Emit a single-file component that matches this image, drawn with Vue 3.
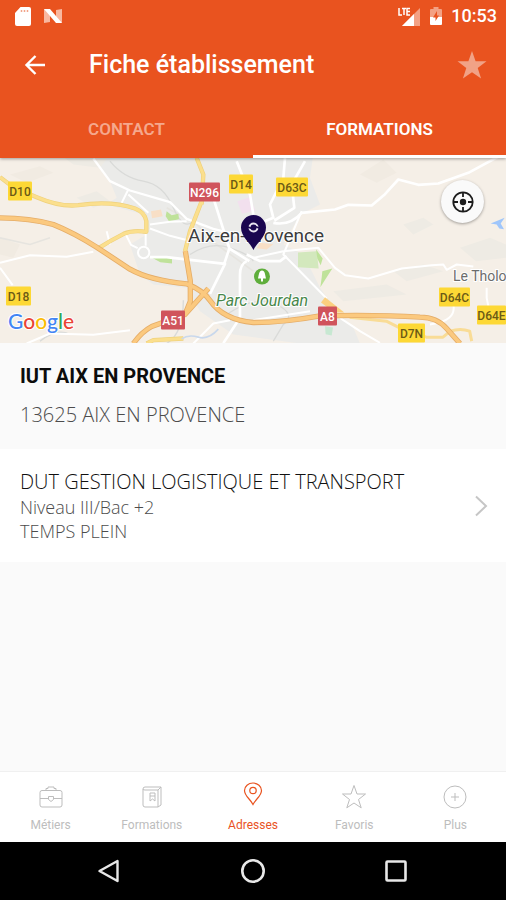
<script setup>
const tabs = [
  { label: 'CONTACT', active: false },
  { label: 'FORMATIONS', active: true },
]

const signs = [
  { text: 'D10', x: 8, y: 24, w: 24, kind: 'yellow' },
  { text: 'D14', x: 229, y: 17, w: 24, kind: 'yellow' },
  { text: 'D63C', x: 276, y: 20, w: 32, kind: 'yellow' },
  { text: 'N296', x: 189, y: 25, w: 31, kind: 'red' },
  { text: 'D18', x: 6, y: 129, w: 25, kind: 'yellow' },
  { text: 'A51', x: 161, y: 153, w: 24, kind: 'red' },
  { text: 'A8', x: 318, y: 149, w: 19, kind: 'red' },
  { text: 'D64C', x: 439, y: 130, w: 31, kind: 'yellow' },
  { text: 'D64E', x: 477, y: 148, w: 29, kind: 'yellow' },
  { text: 'D7N', x: 398, y: 166, w: 27, kind: 'yellow' },
]

const sections = [
  { id: 'metiers', label: 'Métiers' },
  { id: 'formations', label: 'Formations' },
  { id: 'adresses', label: 'Adresses', active: true },
  { id: 'favoris', label: 'Favoris' },
  { id: 'plus', label: 'Plus' },
]
</script>

<template>
  <div class="screen">
    <header class="top">
      <div class="status">
        <svg class="ico-sd" viewBox="0 0 16 19" aria-hidden="true">
          <path d="M5.500 0H14a2 2 0 0 1 2 2v15a2 2 0 0 1-2 2H2a2 2 0 0 1-2-2V6z" fill="#fff" />
          <path d="M6.500 3v2M9.500 3v2M12.500 3v2" stroke="#f2a58a" stroke-width="1.500" />
        </svg>
        <svg class="ico-n" viewBox="0 0 20 16" aria-hidden="true">
          <path d="M1 1l6 2v11l-6 1zM13 2l6-1v14l-6-2z" fill="#f8b8a0" />
          <path d="M1 1h6l12 14h-6z" fill="#fff" />
        </svg>
        <span class="grow"></span>
        <svg class="ico-lte" viewBox="0 0 22 19" aria-hidden="true">
          <path d="M22 1v18H4z" fill="#f3a184" />
          <path d="M16 7v12H4z" fill="#fff" />
          <path d="M1 1v7h3M4 1.500h4M6 1.500V8M12 1.500H9V8h3M9 4.500h3" fill="none" stroke="#fff" stroke-width="1.500" />
        </svg>
        <svg class="ico-bat" viewBox="0 0 12 18" aria-hidden="true">
          <path d="M3.500 0h5v2H11a1 1 0 0 1 1 1v8H0V3a1 1 0 0 1 1-1h2.500z" fill="#f3a184" />
          <path d="M0 10h12v7a1 1 0 0 1-1 1H1a1 1 0 0 1-1-1z" fill="#fff" />
          <path d="M7 4L3 10.500h2.500V14L9 8.500H7z" fill="#e9531f" />
        </svg>
        <time class="clock">10:53</time>
      </div>
      <div class="bar">
        <button class="plain back" aria-label="Retour">
          <svg viewBox="0 0 22 22"><path d="M21 11H3M11.500 2L2.500 11l9 9" fill="none" stroke="#fff" stroke-width="2.400" /></svg>
        </button>
        <h1>Fiche établissement</h1>
        <button class="plain fav" aria-label="Ajouter aux favoris">
          <svg viewBox="0 0 30 28"><path d="M15 0l3.600 10.200H29.500l-8.800 6.800 3.400 10.500L15 21.200 5.900 27.500 9.300 17 .5 10.200h10.900z" fill="#f1a286" /></svg>
        </button>
      </div>
      <nav class="tabs">
        <button v-for="t in tabs" :key="t.label" class="plain tab" :class="{ active: t.active }">{{ t.label }}</button>
      </nav>
    </header>

    <section class="map">
      <svg class="map-art" viewBox="0 0 506 186" preserveAspectRatio="xMidYMid slice">
        <rect width="506" height="186" fill="#f5efe7" />
        <g transform="translate(0 -3) scale(.33333)">
          <g fill="#ebebe9">
            <path d="M270 0L330 80 350 130 320 150 430 180 440 240 390 270 420 360 460 390 560 400 600 470 700 540 900 567H1080L1060 520 1010 470 960 400 910 300 850 270 900 180 960 150 930 70 940 0z" />
            <path d="M180 0h150l-30 40-80-10zM230 130l60-20 40 30-50 20zM1210 210l60-20 30 20-60 30zM1180 350l90-20 60 20-110 30zM1380 280l90-30 48 20v40l-90 10zM1000 410l160-20 60 30-190 20z" fill="#eeebe4" />
            <path d="M30 60l90-25 40 20-80 30zM0 250l60 20-20 40-40-10zM1080 60l70-45 40 40-60 30z" fill="#f1ebe2" />
          </g>
          <path d="M0 250l90 20 60-20M500 160l90 50 60 60 110 80" fill="none" stroke="#e6e4df" stroke-width="5" />
          <g fill="none" stroke="#d9dad8" stroke-width="4">
            <path d="M330 20q40 50 100 60t90 80 60 40M570 300q60-40 120-20t70 40M500 567q50-30 50-130M680 480q90-60 150-30t20 60l-30 50M120 560q50-40 90-20" />
          </g>
          <g fill="#bfe29a">
            <path d="M500 170l15 12 20-4 2 16-30 6-10-15zM448 305l68 6v16l-35-4z" />
            <path d="M894 294l56-4 6 52-62-4z" fill="#d3e8bd" />
            <path d="M948 284l20 28-6 20-10-20zM967 350l30-8-14 22-22 34 4-28z" />
            <path d="M975 515l24 4-4 24-18-4z" fill="#c7e8d2" />
          </g>
          <path d="M453 170l30-5 5 20-32 6zM780 265l40 4-20 16-30-4z" fill="#f8dfc6" />
          <path d="M712 140l38-12 16 40-40 10z" fill="#f2e0ee" />
          <g fill="none" stroke="#fff" stroke-width="8" stroke-linejoin="round">
            <path d="M280 12l50 68 60 28 120 35 50 50 80 30 120 30" stroke-width="7" />
            <path d="M385 105l-20 40M385 120l60 55M0 325l90-23 110 5 80-15M0 340l38 52M320 230l10 40M375 235l18 36 20 10M437 230v44M450 222l60 22 55 14M450 210l60-8 50-2" stroke-width="6" />
            <circle cx="431" cy="294" r="17" stroke-width="6" />
            <path d="M450 308l50 0 70 8 105 12-45 90M640 130l48 152 60 38M688 282l-16 48M710 20l40 100 10 60M740 320q-20 10-20 40v130l-50 76M740 300l40 20 60 0 20-15" />
            <path d="M855 10l-5 60-40 80 10 40-50 20M915 20l-40 70 8 70-60 38M820 205q50 10 85-30l100-10 40-14 70 2 40-34 40-44 60 16 60-4 90-32 100-54" />
            <path d="M905 170l-55 130 30 30 100 102M850 290l105-10 50 60 30 22 70 10 100-30 90-10 35-2 10 16 30-16 50 6M850 290l-90 20M760 497l170-27M1460 400v30l10 50M1290 510q80-10 70-60M1020 490l60 40 60 35" stroke-width="6" />
            <path d="M80 567l70-30 130 4 110-14M580 567l60-60 50-10" stroke-width="6" />
          </g>
          <g fill="none" stroke-linejoin="round">
            <path d="M0 68l40 30 70 30q70 30 125 24 100-14 170 10 30 12 34 38v32q-40-6-68 6-40 20-80 46M590 10l20 50-5 90M605 140l-35 90-15 60M440 567l20-10 90-5" stroke="#efd17c" stroke-width="13" />
            <path d="M0 68l40 30 70 30q70 30 125 24 100-14 170 10 30 12 34 38v32q-40-6-68 6-40 20-80 46M590 10l20 50-5 90M605 140l-35 90-15 60M440 567l20-10 90-5" stroke="#fbdf8d" stroke-width="9" />
            <path d="M1049 488l110 12 40 20 80 28h50l22-18q30-10 58 0l6 30" stroke="#f9dc96" stroke-width="9" />
            <path d="M0 190q90 0 160 20 60 24 130 68l100 66q60 34 170 44 50 20 70 50 40 58 130 66 90 0 200-20 170-4 300 4 50 0 80 34l40 45M625 402l-70 78-100 36q-30 16-55 51M556 290l15 90v60l-16 40" stroke="#e5ad68" stroke-width="16" />
            <path d="M0 190q90 0 160 20 60 24 130 68l100 66q60 34 170 44 50 20 70 50 40 58 130 66 90 0 200-20 170-4 300 4 50 0 80 34l40 45M625 402l-70 78-100 36q-30 16-55 51M556 290l15 90v60l-16 40" stroke="#fbc97f" stroke-width="11" />
          </g>
          <path d="M975 428l-12 16 40 30 30 0z" fill="#fbd07f" />
          <path d="M1472 207l42-17-12 17 10 17-14-2-8-12z" fill="#9fc6fb" />
          <path d="M545 553q20-14 50-5t60-24" fill="none" stroke="#c9d8ec" stroke-width="5" />
        </g>

        <g v-for="s in signs" :key="s.text" class="sign" :class="s.kind">
          <rect :x="s.x" :y="s.y" :width="s.w" height="19" rx="1" />
          <text :x="s.x + s.w / 2" :y="s.y + 14" text-anchor="middle">{{ s.text }}</text>
        </g>
        <text class="city" x="188" y="84">Aix-en-Provence</text>
        <text class="park" x="216" y="148">Parc Jourdan</text>
        <text class="village" x="453" y="123">Le Tholo</text>

        <circle cx="262" cy="119" r="8" fill="#5fae3c" />
        <path d="M262 113c3 0 3 4 4 8h-3v3h-2v-3h-3c1-4 1-8 4-8z" fill="#fff" />
        <path d="M253.500 92.500c-3-7-12.500-13-12.500-22.500a12.500 12.500 0 0 1 25 0c0 9.500-9.500 15.500-12.500 22.500z" fill="#1a0650" />
        <circle cx="253.500" cy="70" r="4" fill="none" stroke="#e8e4f0" stroke-width="2" />
        <path d="M248 69.500l5 2M254 68.500l5 2" stroke="#1a0650" stroke-width="1.500" />
        <text class="google" x="8" y="171"><tspan fill="#4285f4">G</tspan><tspan fill="#ea4335">o</tspan><tspan fill="#fbbc05">o</tspan><tspan fill="#4285f4">g</tspan><tspan fill="#34a853">l</tspan><tspan fill="#ea4335">e</tspan></text>
      </svg>
      <button class="plain locate" aria-label="Me localiser">
        <svg viewBox="0 0 24 24">
          <circle cx="12" cy="12" r="9.700" fill="none" stroke="#1c1c1c" stroke-width="1.800" />
          <circle cx="12" cy="12" r="3.200" fill="#1c1c1c" />
          <path d="M12 2v5M12 17v5M2 12h5M17 12h5" stroke="#1c1c1c" stroke-width="1.800" />
        </svg>
      </button>
    </section>

    <main class="content">
      <section class="school">
        <h2>IUT AIX EN PROVENCE</h2>
        <p>13625 AIX EN PROVENCE</p>
      </section>
      <a class="course" href="#">
        <span class="course-text">
          <span class="course-name">DUT GESTION LOGISTIQUE ET TRANSPORT</span>
          <span class="course-info">Niveau III/Bac +2</span>
          <span class="course-info">TEMPS PLEIN</span>
        </span>
        <svg class="chevron" viewBox="0 0 14 22" aria-hidden="true"><path d="M2 1.500l10 9.500L2 20.500" fill="none" stroke="#c6c6c6" stroke-width="2" /></svg>
      </a>
    </main>

    <nav class="sections">
      <a v-for="s in sections" :key="s.id" href="#" class="section" :class="{ active: s.active }">
        <svg viewBox="0 0 26 26" fill="none" stroke="currentColor" aria-hidden="true">
          <g v-if="s.id === 'metiers'">
            <rect x="2" y="6.500" width="22" height="16.500" rx="2" />
            <path d="M8 6.500V4.500h2V3h6v1.500h2v2M2 14.500h8M16 14.500h8" />
            <path d="M10.500 12.500h5v3l-2.500 2-2.500-2z" />
          </g>
          <g v-else-if="s.id === 'formations'">
            <path d="M4 5q0-2 2-2h16v18l-3 2H6q-2 0-2-2zM4 5q0 1 2 1h13v17M22 3l-3 3" />
            <path d="M11 9h5v8l-2.500-2-2.500 2zM11 12h5" />
          </g>
          <g v-else-if="s.id === 'adresses'" stroke-width="1.200">
            <path d="M13 21.500C10 15.500 4.500 13 4.500 7.500a8.500 7.500 0 0 1 17 0c0 5.500-5.500 8-8.500 14z" />
            <circle cx="13" cy="7.500" r="3.200" />
          </g>
          <path v-else-if="s.id === 'favoris'" d="M13 1.500l3 8.500h8.500l-7 5.500 2.700 8.300L13 19l-7.200 4.800L8.500 15.500l-7-5.500H10z" />
          <g v-else>
            <circle cx="13" cy="13" r="11" />
            <path d="M13 9v8M9 13h8" />
          </g>
        </svg>
        <span>{{ s.label }}</span>
      </a>
    </nav>

    <footer class="system">
      <button class="plain" aria-label="Précédent"><svg viewBox="0 0 26 26"><path d="M20.500 3v20L2.500 13z" fill="none" stroke="#e8e8e8" stroke-width="2.400" stroke-linejoin="round" /></svg></button>
      <button class="plain" aria-label="Accueil"><svg viewBox="0 0 26 26"><circle cx="13" cy="13" r="10.700" fill="none" stroke="#e8e8e8" stroke-width="2.600" /></svg></button>
      <button class="plain" aria-label="Applications récentes"><svg viewBox="0 0 26 26"><rect x="3.500" y="3.500" width="19" height="19" rx="1" fill="none" stroke="#e8e8e8" stroke-width="2.600" /></svg></button>
    </footer>
  </div>
</template>

<style>
body {
  margin: 0;
  background: #fafafa;
}
</style>

<style scoped>
.screen {
  display: flex;
  flex-direction: column;
  min-height: 100vh;
  background: #fafafa;
  font-family: "Open Sans", "Noto Sans", sans-serif;
}
svg {
  display: block;
}
.plain {
  padding: 0;
  border: 0;
  background: none;
  font: inherit;
  color: inherit;
  cursor: pointer;
}
.top {
  position: relative;
  z-index: 1;
  background: #e9531f;
  color: #fff;
  box-shadow: 0 1px 3px rgba(0, 0, 0, 0.35);
}
.status {
  display: flex;
  align-items: center;
  height: 32px;
  padding: 0 9px 0 15px;
}
.grow {
  flex: 1;
}
.ico-sd {
  width: 16px;
  height: 19px;
  margin-right: 12px;
}
.ico-n {
  width: 20px;
  height: 16px;
}
.ico-lte {
  width: 22px;
  height: 19px;
  margin-right: 10px;
}
.ico-bat {
  width: 12px;
  height: 18px;
  margin-right: 9px;
}
.clock {
  font: 500 18px/32px Roboto, sans-serif;
}
.bar {
  display: flex;
  align-items: center;
  height: 66px;
  padding: 0 19px 0 24px;
}
.back svg {
  width: 22px;
  height: 22px;
}
h1 {
  flex: 1;
  margin: 0 0 0 43px;
  font: 500 25px/32px Roboto, sans-serif;
}
.fav svg {
  width: 30px;
  height: 28px;
}
.tabs {
  display: flex;
  height: 60px;
}
.tab {
  flex: 1;
  padding-top: 4px;
  border-bottom: 3px solid transparent;
  font: 600 17px/24px Roboto, sans-serif;
  color: #f5a88d;
}
.tab.active {
  border-bottom-color: #fff;
  color: #fff;
}
.map {
  position: relative;
}
.map-art {
  width: 100%;
  height: 185px;
}
.sign text {
  font: 500 12px Roboto, sans-serif;
}
.yellow rect {
  fill: #fdd835;
}
.yellow text {
  fill: #6b5a16;
}
.red rect {
  fill: #d0545c;
}
.red text {
  fill: #fff;
}
.city,
.park,
.village {
  font: 400 19px Roboto, sans-serif;
  fill: #3c3c3c;
  stroke: #fff;
  stroke-width: 2px;
  paint-order: stroke;
}
.park {
  font-size: 16px;
  font-style: italic;
  fill: #48874a;
}
.village {
  font-size: 14px;
  fill: #6c6c6c;
}
.google {
  font: 500 21px Lato, sans-serif;
  stroke: #fff;
  stroke-width: 2px;
  paint-order: stroke;
}
.locate {
  position: absolute;
  top: 22px;
  right: 22px;
  display: grid;
  place-items: center;
  width: 43px;
  height: 43px;
  border-radius: 50%;
  background: #fafafa;
  box-shadow: 0 1px 3px rgba(0, 0, 0, 0.35);
}
.locate svg {
  width: 24px;
  height: 24px;
}
.content {
  flex: 1;
}
.school {
  padding: 17px 20px 18px;
}
h2 {
  margin: 0;
  font: 700 20px/32px Roboto, sans-serif;
  color: #0c0c0c;
}
.school p {
  margin: 7px 0 0;
  font-size: 20px;
  font-weight: 300;
  line-height: 32px;
  color: #4c4c4c;
}
.course {
  display: flex;
  align-items: center;
  padding: 20px 18px 19px 20px;
  background: #fff;
  text-decoration: none;
}
.course-text {
  flex: 1;
  display: flex;
  flex-direction: column;
}
.course-name {
  font-size: 20px;
  line-height: 26px;
  font-weight: 300;
  color: #111;
}
.course-info {
  font-size: 18px;
  line-height: 24px;
  font-weight: 300;
  color: #4c4c4c;
}
.chevron {
  width: 14px;
  height: 22px;
}
.sections {
  display: flex;
  height: 70px;
  border-top: 1px solid #f0f0f0;
  background: #fff;
}
.section {
  flex: 1;
  display: flex;
  flex-direction: column;
  align-items: center;
  padding-top: 12px;
  font: 400 12px/16px Roboto, sans-serif;
  color: #bdbdbd;
  text-decoration: none;
}
.section svg {
  width: 26px;
  height: 26px;
  margin-bottom: 7px;
  overflow: visible;
}
.section.active {
  color: #e9531f;
}
.section.active path,
.section.active circle {
  translate: 0 -1px;
}
.system {
  display: flex;
  justify-content: center;
  align-items: center;
  gap: 117px;
  height: 58px;
  background: #000;
}
.system svg {
  width: 26px;
  height: 26px;
}
</style>
